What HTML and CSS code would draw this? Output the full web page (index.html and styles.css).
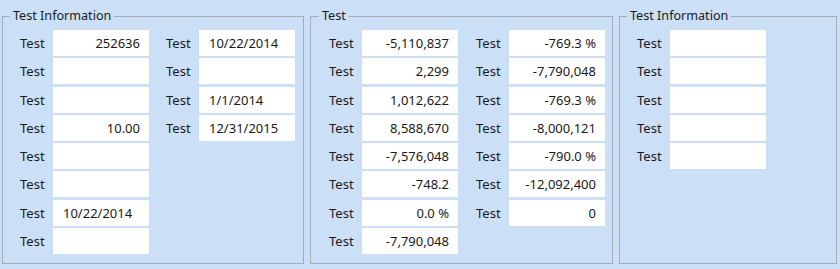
FILE: index.html
```html
<!DOCTYPE html>
<html>
<head>
<meta charset="utf-8">
<link rel="stylesheet" href="styles.css">
</head>
<body>
<div class="page">
  <fieldset class="group g1">
    <legend>Test Information</legend>
    <div class="cols">
      <div class="col">
        <span class="lbl">Test</span><span class="fld num">252636</span>
        <span class="lbl">Test</span><span class="fld"></span>
        <span class="lbl">Test</span><span class="fld"></span>
        <span class="lbl">Test</span><span class="fld num">10.00</span>
        <span class="lbl">Test</span><span class="fld"></span>
        <span class="lbl">Test</span><span class="fld"></span>
        <span class="lbl">Test</span><span class="fld">10/22/2014</span>
        <span class="lbl">Test</span><span class="fld"></span>
      </div>
      <div class="col">
        <span class="lbl">Test</span><span class="fld">10/22/2014</span>
        <span class="lbl">Test</span><span class="fld"></span>
        <span class="lbl">Test</span><span class="fld">1/1/2014</span>
        <span class="lbl">Test</span><span class="fld">12/31/2015</span>
      </div>
    </div>
  </fieldset>
  <fieldset class="group g2">
    <legend>Test</legend>
    <div class="cols">
      <div class="col">
        <span class="lbl">Test</span><span class="fld num">-5,110,837</span>
        <span class="lbl">Test</span><span class="fld num">2,299</span>
        <span class="lbl">Test</span><span class="fld num">1,012,622</span>
        <span class="lbl">Test</span><span class="fld num">8,588,670</span>
        <span class="lbl">Test</span><span class="fld num">-7,576,048</span>
        <span class="lbl">Test</span><span class="fld num">-748.2</span>
        <span class="lbl">Test</span><span class="fld num">0.0 %</span>
        <span class="lbl">Test</span><span class="fld num">-7,790,048</span>
      </div>
      <div class="col">
        <span class="lbl">Test</span><span class="fld num">-769.3 %</span>
        <span class="lbl">Test</span><span class="fld num">-7,790,048</span>
        <span class="lbl">Test</span><span class="fld num">-769.3 %</span>
        <span class="lbl">Test</span><span class="fld num">-8,000,121</span>
        <span class="lbl">Test</span><span class="fld num">-790.0 %</span>
        <span class="lbl">Test</span><span class="fld num">-12,092,400</span>
        <span class="lbl">Test</span><span class="fld num">0</span>
      </div>
    </div>
  </fieldset>
  <fieldset class="group g3">
    <legend>Test Information</legend>
    <div class="cols">
      <div class="col">
        <span class="lbl">Test</span><span class="fld"></span>
        <span class="lbl">Test</span><span class="fld"></span>
        <span class="lbl">Test</span><span class="fld"></span>
        <span class="lbl">Test</span><span class="fld"></span>
        <span class="lbl">Test</span><span class="fld"></span>
      </div>
    </div>
  </fieldset>
</div>
</body>
</html>
```
FILE: styles.css
```css
html, body {
  margin: 0;
  padding: 0;
  background: #cbe0f6;
}
body {
  font-family: "Noto Sans", "Open Sans", sans-serif;
  font-size: 13px;
  color: #1a1a1a;
  width: 840px;
  height: 269px;
  overflow: hidden;
}
.page {
  display: flex;
  align-items: stretch;
  gap: 6px;
  padding: 8px 0 0 2px;
}
.group {
  margin: 0;
  border: 1px solid #a3adb8;
  padding: 5px 8px 9px 17px;
  min-width: 0;
  box-sizing: border-box;
}
.g1 { width: 302px; }
.g2 { width: 303px; padding-left: 18px; }
.g3 { width: 218px; }
legend {
  margin-left: -10px;
  padding: 0 3px 2px;
  font-size: 12.6px;
  line-height: 15px;
}
.cols {
  display: flex;
  gap: 17px;
  align-items: flex-start;
}
.g2 .cols { gap: 18px; }
.col {
  display: grid;
  grid-template-columns: 33px 96px;
  row-gap: 2.29px;
}
.lbl {
  height: 26px;
  line-height: 26px;
  white-space: nowrap;
}
.fld {
  height: 26px;
  line-height: 26px;
  background: #ffffff;
  padding: 0 9px 0 10px;
  white-space: nowrap;
  overflow: hidden;
}
.num {
  text-align: right;
}
```
